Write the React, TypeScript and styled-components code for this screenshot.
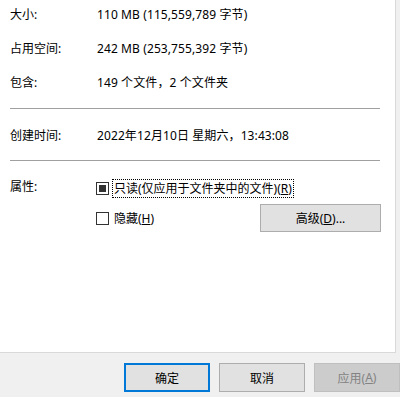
import React from "react";
import styled, { createGlobalStyle } from "styled-components";

const Global = createGlobalStyle`
  html, body { margin: 0; padding: 0; background: #f0f0f0; }
  body {
    font-family: "Noto Sans", "Noto Sans CJK SC", sans-serif;
    font-size: 12px;
    color: #000;
    width: 400px;
    height: 397px;
    overflow: hidden;
  }
`;

const Window = styled.div`
  width: 400px;
  height: 397px;
  display: flex;
  flex-direction: column;
  background: #f0f0f0;
`;

const Panel = styled.div`
  width: 396px;
  height: 353px;
  background: #fff;
  border-right: 1px solid #d9d9d9;
  border-bottom: 1px solid #d9d9d9;
  display: flex;
  flex-direction: column;
  padding: 5px 0 0 10px;
  box-sizing: border-box;
  flex-shrink: 0;
`;

const InfoRow = styled.div<{ $top?: number }>`
  display: grid;
  grid-template-columns: 87px 1fr;
  align-items: center;
  height: 20px;
  margin-top: ${(p) => p.$top ?? 0}px;
  white-space: nowrap;
`;

const Label = styled.span`
  line-height: 20px;
`;

const Value = styled.span`
  line-height: 20px;
  letter-spacing: 0.1px;
`;

const Separator = styled.div<{ $top: number }>`
  width: 370px;
  height: 1px;
  background: #a0a0a0;
  margin-top: ${(p) => p.$top}px;
`;

const AttrBlock = styled.div`
  display: grid;
  grid-template-columns: 86px 1fr;
  margin-top: 17px;
`;

const AttrLabel = styled.span`
  line-height: 20px;
  margin-top: -1px;
`;

const AttrOptions = styled.div`
  display: flex;
  flex-direction: column;
`;

const CheckLine = styled.div`
  display: flex;
  align-items: center;
  height: 20px;
`;

const CheckLine2 = styled.div`
  display: flex;
  align-items: center;
  justify-content: space-between;
  margin-top: 6px;
  width: 285px;
`;

const Box = styled.span<{ $checked?: boolean }>`
  width: 11px;
  height: 11px;
  border: 1px solid #333;
  box-sizing: content-box;
  display: inline-flex;
  align-items: center;
  justify-content: center;
  background: #fff;
  flex-shrink: 0;
  &::after {
    content: "";
    width: 7px;
    height: 7px;
    background: ${(p) => (p.$checked ? "#333" : "transparent")};
  }
`;

const CheckText = styled.span<{ $focus?: boolean }>`
  margin-left: 3px;
  padding: 0 1px;
  line-height: 17px;
  border: 1px dotted ${(p) => (p.$focus ? "#000" : "transparent")};
  white-space: nowrap;
`;

const Mn = styled.span`
  text-decoration: underline;
  text-underline-offset: 1px;
`;

const Button = styled.button<{
  $variant?: "default" | "primary" | "disabled";
  $w?: number;
  $h?: number;
}>`
  font-family: inherit;
  font-size: 12px;
  width: ${(p) => p.$w ?? 86}px;
  height: ${(p) => p.$h ?? 29}px;
  padding: 0;
  box-sizing: border-box;
  background: ${(p) => (p.$variant === "disabled" ? "#cccccc" : "#e1e1e1")};
  color: ${(p) => (p.$variant === "disabled" ? "#838383" : "#000")};
  border: ${(p) =>
    p.$variant === "primary"
      ? "2px solid #0078d7"
      : p.$variant === "disabled"
      ? "1px solid #bfbfbf"
      : "1px solid #adadad"};
  display: flex;
  align-items: center;
  justify-content: center;
  flex-shrink: 0;
`;

const Footer = styled.div`
  display: flex;
  gap: 9px;
  padding: 10px 0 0 124px;
  height: 44px;
  box-sizing: border-box;
`;

export default function App() {
  return (
    <>
      <Global />
      <Window>
        <Panel>
          <InfoRow>
            <Label>大小:</Label>
            <Value>110 MB (115,559,789 字节)</Value>
          </InfoRow>
          <InfoRow $top={14}>
            <Label>占用空间:</Label>
            <Value>242 MB (253,755,392 字节)</Value>
          </InfoRow>
          <InfoRow $top={14}>
            <Label>包含:</Label>
            <Value>149 个文件，2 个文件夹</Value>
          </InfoRow>
          <Separator $top={15} />
          <InfoRow $top={17}>
            <Label>创建时间:</Label>
            <Value>2022年12月10日 星期六，13:43:08</Value>
          </InfoRow>
          <Separator $top={14} />
          <AttrBlock>
            <AttrLabel>属性:</AttrLabel>
            <AttrOptions>
              <CheckLine>
                <Box $checked />
                <CheckText $focus>
                  只读(仅应用于文件夹中的文件)(<Mn>R</Mn>)
                </CheckText>
              </CheckLine>
              <CheckLine2>
                <CheckLine>
                  <Box />
                  <CheckText>
                    隐藏(<Mn>H</Mn>)
                  </CheckText>
                </CheckLine>
                <Button $w={121} $h={28}>
                  高级(<Mn>D</Mn>)...
                </Button>
              </CheckLine2>
            </AttrOptions>
          </AttrBlock>
        </Panel>
        <Footer>
          <Button $variant="primary">确定</Button>
          <Button>取消</Button>
          <Button $variant="disabled">
            应用(<Mn>A</Mn>)
          </Button>
        </Footer>
      </Window>
    </>
  );
}
